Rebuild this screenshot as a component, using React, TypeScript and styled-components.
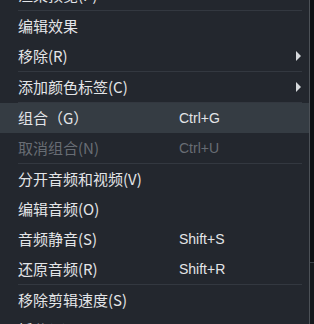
import React from "react";
import styled, { createGlobalStyle } from "styled-components";

const Global = createGlobalStyle`
  html, body { margin: 0; padding: 0; background: #0f1114; overflow: hidden; }
  #root { width: 314px; height: 324px; }
`;

const Screen = styled.div`
  display: flex;
  width: 314px;
  height: 324px;
`;

const Menu = styled.div`
  width: 309px;
  height: 324px;
  background: #23272e;
  border-right: 1px solid #4c5157;
  overflow: hidden;
  flex: none;
`;

const List = styled.div`
  display: flex;
  flex-direction: column;
  margin-top: -20px;
`;

const Item = styled.div<{ $active?: boolean; $disabled?: boolean }>`
  display: grid;
  grid-template-columns: 161px 1fr 12px;
  align-items: center;
  height: 30px;
  padding: 0 7px 0 18px;
  background: ${(p) => (p.$active ? "#353c43" : "transparent")};
  color: ${(p) => (p.$disabled ? "#686d74" : "#e3e5e8")};
  flex: none;
`;

const Label = styled.span`
  font-family: "Noto Sans CJK SC", "Noto Sans", sans-serif;
  font-size: 15px;
  line-height: 30px;
  white-space: nowrap;
`;

const Shortcut = styled.span`
  font-family: "Liberation Sans", Arial, sans-serif;
  font-size: 14px;
  line-height: 30px;
  white-space: nowrap;
`;

const Arrow = styled.svg`
  display: block;
  justify-self: end;
  margin-right: 1px;
`;

const Separator = styled.div`
  height: 1px;
  margin: 0 7px 0 18px;
  background: #333840;
  flex: none;
`;

const Backdrop = styled.div`
  flex: 1;
  display: flex;
  flex-direction: column;
`;

const BackTop = styled.div`
  height: 262px;
  background: #0e1013;
  border-bottom: 1px solid #3a3f45;
`;

const BackBottom = styled.div`
  flex: 1;
  background: #15181c;
`;

type Entry =
  | { kind: "sep" }
  | { kind: "item"; label: string; shortcut?: string; sub?: boolean; active?: boolean; disabled?: boolean };

const entries: Entry[] = [
  { kind: "item", label: "渲染预览(P)" },
  { kind: "sep" },
  { kind: "item", label: "编辑效果" },
  { kind: "item", label: "移除(R)", sub: true },
  { kind: "sep" },
  { kind: "item", label: "添加颜色标签(C)", sub: true },
  { kind: "sep" },
  { kind: "item", label: "组合（G）", shortcut: "Ctrl+G", active: true },
  { kind: "item", label: "取消组合(N)", shortcut: "Ctrl+U", disabled: true },
  { kind: "sep" },
  { kind: "item", label: "分开音频和视频(V)" },
  { kind: "item", label: "编辑音频(O)" },
  { kind: "item", label: "音频静音(S)", shortcut: "Shift+S" },
  { kind: "item", label: "还原音频(R)", shortcut: "Shift+R" },
  { kind: "sep" },
  { kind: "item", label: "移除剪辑速度(S)" },
  { kind: "item", label: "拆分(S)" },
];

export default function App() {
  return (
    <>
      <Global />
      <Screen>
        <Menu>
          <List>
            {entries.map((e, i) =>
              e.kind === "sep" ? (
                <Separator key={i} />
              ) : (
                <Item key={i} $active={e.active} $disabled={e.disabled}>
                  <Label>{e.label}</Label>
                  <Shortcut>{e.shortcut ?? ""}</Shortcut>
                  {e.sub ? (
                    <Arrow width="5" height="10" viewBox="0 0 5 10">
                      <path d="M0 0 L5 5 L0 10 Z" fill="#d6d9dc" />
                    </Arrow>
                  ) : (
                    <span />
                  )}
                </Item>
              )
            )}
          </List>
        </Menu>
        <Backdrop>
          <BackTop />
          <BackBottom />
        </Backdrop>
      </Screen>
    </>
  );
}
